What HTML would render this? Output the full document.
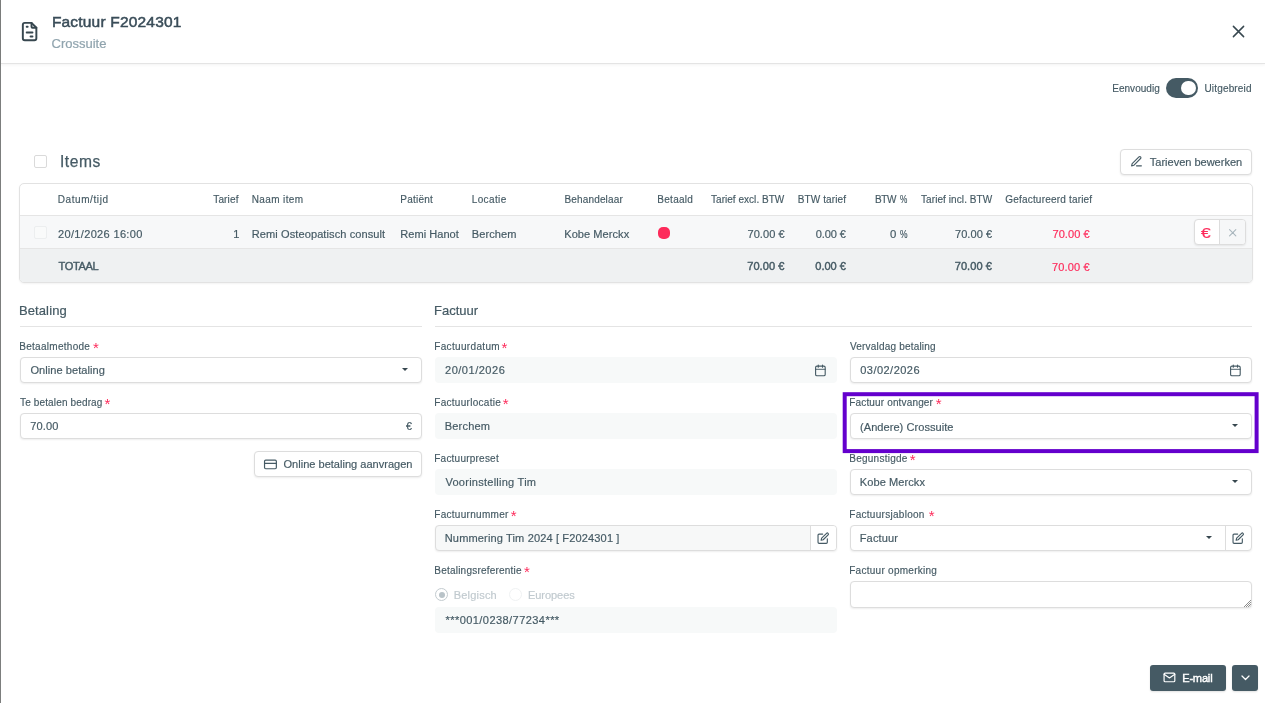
<!DOCTYPE html>
<html lang="nl">
<head>
<meta charset="utf-8">
<title>Factuur F2024301</title>
<style>
*{box-sizing:border-box;margin:0;padding:0}
html,body{width:1265px;height:703px;overflow:hidden;background:#fff}
body{font-family:"Liberation Sans",sans-serif;color:#455a64;font-size:12px;position:relative}
.abs{position:absolute}
.t{position:absolute;white-space:nowrap;line-height:1}
#txt{position:absolute;left:0;top:0;width:1265px;height:703px;will-change:transform}
#leftedge{position:absolute;left:0;top:0;width:1px;height:703px;background:#7c7e7d}
#header{position:absolute;left:1px;top:0;width:1264px;height:64px;border-bottom:1px solid #e4e4e4;box-shadow:0 1px 3px rgba(0,0,0,.05);background:#fff}
.inp{position:absolute;height:26px;border:1px solid #dddddd;border-radius:4px;background:#fff;box-shadow:0 1px 2px rgba(0,0,0,.07)}
.ro{position:absolute;height:26px;border-radius:4px;background:#f7f9f9}
.caret{position:absolute;width:0;height:0;border-left:3.25px solid transparent;border-right:3.25px solid transparent;border-top:3.5px solid #37474f}
.btn{position:absolute;border:1px solid #dddddd;border-radius:4px;background:#fff;box-shadow:0 1px 2px rgba(0,0,0,.08)}
svg{position:absolute;overflow:visible}
</style>
</head>
<body>
<div id="leftedge"></div>
<div id="header"></div>
<svg style="left:18.100px;top:20px" width="23.200" height="23.200" viewBox="0 0 24 24" fill="none" stroke="#37474f" stroke-width="2" stroke-linecap="round" stroke-linejoin="round"><path d="M14 3v4a1 1 0 0 0 1 1h4"/><path d="M17 21h-10a2 2 0 0 1 -2 -2v-14a2 2 0 0 1 2 -2h7l5 5v11a2 2 0 0 1 -2 2z"/><path d="M9 7h1M9 13h6M13 17h2"/></svg>
<svg style="left:1232px;top:25px" width="13" height="13" viewBox="0 0 13 13" stroke="#37474f" stroke-width="1.500" stroke-linecap="round"><path d="M1.400 1.400l10.200 10.200M11.600 1.400l-10.200 10.200"/></svg>

<!-- toggle -->
<div class="abs" style="left:1166px;top:78px;width:32px;height:20px;border-radius:10px;background:#455a64"></div>
<div class="abs" style="left:1181.200px;top:80.600px;width:14.800px;height:14.800px;border-radius:50%;background:#fff"></div>

<!-- items -->
<div class="abs" style="left:34px;top:155px;width:13px;height:13px;border:1px solid #dadada;border-radius:2px;background:#fff"></div>
<div class="btn" style="left:1120px;top:149px;width:132px;height:26px"></div>
<svg style="left:1129.700px;top:154.800px" width="13" height="13" viewBox="0 0 24 24" fill="none" stroke="#455a64" stroke-width="2.100" stroke-linecap="round" stroke-linejoin="round"><path d="M12 20h9"/><path d="M16.500 3.500a2.121 2.121 0 0 1 3 3L7 19l-4 1 1-4L16.500 3.500z"/></svg>

<!-- table -->
<div class="abs" id="table" style="left:19px;top:183px;width:1234px;height:100px;border:1px solid #e2e2e2;border-radius:5px;background:#fff;overflow:hidden;box-shadow:0 1px 2px rgba(0,0,0,.05)">
  <div class="abs" style="left:0;top:31px;width:1234px;height:1px;background:#e5e5e5"></div>
  <div class="abs" style="left:0;top:32px;width:1234px;height:33px;background:#f7f8f9"></div>
  <div class="abs" style="left:0;top:64px;width:1234px;height:1px;background:#e5e5e5"></div>
  <div class="abs" style="left:0;top:65px;width:1234px;height:34px;background:#eff1f2"></div>
</div>
<div class="abs" style="left:34px;top:226px;width:13px;height:13px;border:1px solid #eceeef;border-radius:2px;background:#f9fafa"></div>


<div class="abs" style="left:658px;top:227px;width:12px;height:12px;border-radius:5px;background:#fd2b5b"></div>


<!-- row buttons -->
<div class="btn" style="left:1194px;top:219px;width:52px;height:26px;overflow:hidden"><div class="abs" style="left:24px;top:0;width:1px;height:24px;background:#dddddd"></div><div class="abs" style="left:25px;top:0;width:25px;height:24px;background:#f6f7f8"></div></div>
<svg style="left:1228.700px;top:228.800px" width="7.400" height="7.400" viewBox="0 0 8 8" stroke="#a9b6bd" stroke-width="1.150" stroke-linecap="round"><path d="M.6.6l6.800 6.800M7.400.6L.6 7.400"/></svg>

<!-- sections -->
<div class="abs" style="left:20px;top:326px;width:402px;height:1px;background:#e4e4e4"></div>
<div class="abs" style="left:435px;top:326px;width:817px;height:1px;background:#e4e4e4"></div>

<!-- Betaling column -->
<div class="inp" style="left:20px;top:357px;width:402px"></div>
<div class="caret" style="left:401.750px;top:368px"></div>

<div class="inp" style="left:20px;top:413px;width:402px"></div>

<div class="btn" style="left:254px;top:451px;width:168px;height:26px"></div>
<svg style="left:263.800px;top:457.500px" width="12.900" height="12.900" viewBox="0 0 24 24" fill="none" stroke="#455a64" stroke-width="2.200" stroke-linecap="round" stroke-linejoin="round"><rect x="1" y="4" width="22" height="16" rx="2.200"/><path d="M1 10h22"/></svg>

<!-- Factuur col 1 -->
<div class="ro" style="left:435px;top:357px;width:402px"></div>
<svg style="left:814px;top:364.100px" width="12.800" height="12.800" viewBox="0 0 24 24" fill="none" stroke="#455a64" stroke-width="2.100" stroke-linecap="round" stroke-linejoin="round"><rect x="3" y="4" width="18" height="18" rx="2.500"/><path d="M16 2v4M8 2v4"/><path d="M3 10h18" stroke-opacity=".75"/></svg>

<div class="ro" style="left:435px;top:413px;width:402px"></div>

<div class="ro" style="left:435px;top:469px;width:402px"></div>

<div class="inp" style="left:435px;top:525px;width:402px;background:#f7f8f8;overflow:hidden"><div class="abs" style="left:374px;top:0;width:1px;height:24px;background:#dddddd"></div><div class="abs" style="left:375px;top:0;width:26px;height:24px;background:#fff"></div></div>
<svg style="left:816.900px;top:531.700px" width="12.400" height="12.400" viewBox="0 0 24 24" fill="none" stroke="#455a64" stroke-width="2.200" stroke-linecap="round" stroke-linejoin="round"><path d="M11 4H4a2 2 0 0 0-2 2v14a2 2 0 0 0 2 2h14a2 2 0 0 0 2-2v-7"/><path d="M18.500 2.500a2.121 2.121 0 0 1 3 3L12 15l-4 1 1-4 9.500-9.500z"/></svg>

<div class="abs" style="left:435px;top:588px;width:13px;height:13px;border-radius:50%;border:1px solid #c3cbcf;background:#fff"></div>
<div class="abs" style="left:438.500px;top:591.500px;width:6px;height:6px;border-radius:50%;background:#b9c3c8"></div>
<div class="abs" style="left:509px;top:588px;width:13px;height:13px;border-radius:50%;border:1px solid #f0f2f3;background:#fff"></div>
<div class="ro" style="left:435px;top:607px;width:402px"></div>

<!-- Factuur col 2 -->
<div class="inp" style="left:850px;top:357px;width:402px"></div>
<svg style="left:1229px;top:364.100px" width="12.800" height="12.800" viewBox="0 0 24 24" fill="none" stroke="#455a64" stroke-width="2.100" stroke-linecap="round" stroke-linejoin="round"><rect x="3" y="4" width="18" height="18" rx="2.500"/><path d="M16 2v4M8 2v4"/><path d="M3 10h18" stroke-opacity=".75"/></svg>

<svg style="left:0;top:0" width="1265" height="703"><rect x="844.700" y="394.200" width="411.900" height="56.900" fill="none" stroke="#6400cd" stroke-width="4"/></svg>
<div class="inp" style="left:850px;top:413px;width:402px"></div>
<div class="caret" style="left:1231.750px;top:424px"></div>

<div class="inp" style="left:850px;top:469px;width:402px"></div>
<div class="caret" style="left:1231.750px;top:480px"></div>

<div class="inp" style="left:850px;top:525px;width:402px;overflow:hidden"><div class="abs" style="left:374px;top:0;width:1px;height:24px;background:#dddddd"></div></div>
<div class="caret" style="left:1205.750px;top:536px"></div>
<svg style="left:1231.900px;top:531.700px" width="12.400" height="12.400" viewBox="0 0 24 24" fill="none" stroke="#455a64" stroke-width="2.200" stroke-linecap="round" stroke-linejoin="round"><path d="M11 4H4a2 2 0 0 0-2 2v14a2 2 0 0 0 2 2h14a2 2 0 0 0 2-2v-7"/><path d="M18.500 2.500a2.121 2.121 0 0 1 3 3L12 15l-4 1 1-4 9.500-9.500z"/></svg>

<div class="inp" style="left:850px;top:581px;width:402px;height:27px;overflow:hidden"><svg style="right:0;bottom:0" width="7" height="7" viewBox="0 0 7 7" fill="#8e8e8e" shape-rendering="crispEdges"><rect x="6" y="0" width="1" height="1"/><rect x="5" y="1" width="1" height="1"/><rect x="4" y="2" width="1" height="1"/><rect x="6" y="2" width="1" height="1"/><rect x="3" y="3" width="1" height="1"/><rect x="5" y="3" width="1" height="1"/><rect x="2" y="4" width="1" height="1"/><rect x="4" y="4" width="1" height="1"/><rect x="6" y="4" width="1" height="1"/><rect x="1" y="5" width="1" height="1"/><rect x="3" y="5" width="1" height="1"/><rect x="5" y="5" width="1" height="1"/><rect x="0" y="6" width="1" height="1"/><rect x="2" y="6" width="1" height="1"/><rect x="4" y="6" width="1" height="1"/><rect x="6" y="6" width="1" height="1"/></svg></div>


<!-- footer buttons -->
<div class="abs" style="left:1150px;top:665px;width:76px;height:26px;border-radius:3px;background:#455a64;box-shadow:0 1px 2px rgba(0,0,0,.12)"></div>
<svg style="left:1163px;top:670.900px" width="12.900" height="12.900" viewBox="0 0 24 24" fill="none" stroke="#fff" stroke-width="2.200" stroke-linecap="round" stroke-linejoin="round"><path d="M4 4h16c1.100 0 2 .9 2 2v12c0 1.100-.9 2-2 2H4c-1.100 0-2-.9-2-2V6c0-1.100.9-2 2-2z"/><path d="M22 6l-10 7L2 6"/></svg>
<div class="abs" style="left:1232px;top:665px;width:26px;height:26px;border-radius:3px;background:#455a64;box-shadow:0 1px 2px rgba(0,0,0,.12)"></div>
<svg style="left:1241px;top:675px" width="9" height="6" viewBox="0 0 9 6" fill="none" stroke="#fff" stroke-width="1.250" stroke-linecap="round" stroke-linejoin="round"><path d="M1 1l3.500 3.500L8 1"/></svg>
<div id="txt">
<div class="t" style="left:51.90px;top:14px;font-size:15.5px;color:#3a4d59;-webkit-text-stroke:0.51px #3a4d59;letter-spacing:0.190px;">Factuur F2024301</div>
<div class="t" style="left:51.50px;top:37px;font-size:13px;color:#90a4ae;-webkit-text-stroke:0.21px #90a4ae;">Crossuite</div>
<div class="t" style="left:1112.25px;top:84px;font-size:10px;color:#455a64;-webkit-text-stroke:0.16px #455a64;letter-spacing:0.025px;">Eenvoudig</div>
<div class="t" style="left:1204.40px;top:84px;font-size:10px;color:#455a64;-webkit-text-stroke:0.16px #455a64;letter-spacing:0.178px;">Uitgebreid</div>
<div class="t" style="left:59.95px;top:154px;font-size:15.6px;color:#455a64;-webkit-text-stroke:0.25px #455a64;letter-spacing:0.575px;">Items</div>
<div class="t" style="left:1149.80px;top:157px;font-size:11.05px;color:#455a64;-webkit-text-stroke:0.18px #455a64;letter-spacing:-0.022px;">Tarieven bewerken</div>
<div class="t" style="left:57.75px;top:195px;font-size:10px;color:#455a64;-webkit-text-stroke:0.16px #455a64;letter-spacing:0.583px;">Datum/tijd</div>
<div class="t" style="left:213.25px;top:195px;font-size:10px;color:#455a64;-webkit-text-stroke:0.16px #455a64;letter-spacing:0.150px;">Tarief</div>
<div class="t" style="left:251.75px;top:195px;font-size:10px;color:#455a64;-webkit-text-stroke:0.16px #455a64;letter-spacing:0.375px;">Naam item</div>
<div class="t" style="left:400.25px;top:195px;font-size:10px;color:#455a64;-webkit-text-stroke:0.16px #455a64;letter-spacing:0.250px;">Patiënt</div>
<div class="t" style="left:471.75px;top:195px;font-size:10px;color:#455a64;-webkit-text-stroke:0.16px #455a64;letter-spacing:0.375px;">Locatie</div>
<div class="t" style="left:564.50px;top:195px;font-size:10px;color:#455a64;-webkit-text-stroke:0.16px #455a64;letter-spacing:0.150px;">Behandelaar</div>
<div class="t" style="left:657.25px;top:195px;font-size:10px;color:#455a64;-webkit-text-stroke:0.16px #455a64;letter-spacing:0.292px;">Betaald</div>
<div class="t" style="left:711.00px;top:195px;font-size:10px;color:#455a64;-webkit-text-stroke:0.16px #455a64;letter-spacing:0.033px;">Tarief excl. BTW</div>
<div class="t" style="left:797.75px;top:195px;font-size:10px;color:#455a64;-webkit-text-stroke:0.16px #455a64;letter-spacing:0.111px;">BTW tarief</div>
<div class="t" style="left:874.95px;top:195px;font-size:10px;color:#455a64;-webkit-text-stroke:0.16px #455a64;letter-spacing:-0.350px;">BTW</div>
<div class="t" style="left:900.09px;top:195px;font-size:10px;color:#455a64;-webkit-text-stroke:0.16px #455a64;transform:scaleX(0.824);transform-origin:0 0;">%</div>
<div class="t" style="left:921.00px;top:195px;font-size:10px;color:#455a64;-webkit-text-stroke:0.16px #455a64;letter-spacing:0.083px;">Tarief incl. BTW</div>
<div class="t" style="left:1005.25px;top:195px;font-size:10px;color:#455a64;-webkit-text-stroke:0.16px #455a64;letter-spacing:0.194px;">Gefactureerd tarief</div>
<div class="t" style="left:58.00px;top:229px;font-size:11.05px;color:#455a64;-webkit-text-stroke:0.18px #455a64;letter-spacing:0.321px;">20/1/2026 16:00</div>
<div class="t" style="left:233.25px;top:229px;font-size:11.05px;color:#455a64;-webkit-text-stroke:0.18px #455a64;">1</div>
<div class="t" style="left:251.75px;top:229px;font-size:11.05px;color:#455a64;-webkit-text-stroke:0.18px #455a64;letter-spacing:0.083px;">Remi Osteopatisch consult</div>
<div class="t" style="left:400.25px;top:229px;font-size:11.05px;color:#455a64;-webkit-text-stroke:0.18px #455a64;letter-spacing:0.028px;">Remi Hanot</div>
<div class="t" style="left:471.75px;top:229px;font-size:11.05px;color:#455a64;-webkit-text-stroke:0.18px #455a64;letter-spacing:0.083px;">Berchem</div>
<div class="t" style="left:564.25px;top:229px;font-size:11.05px;color:#455a64;-webkit-text-stroke:0.18px #455a64;letter-spacing:0.050px;">Kobe Merckx</div>
<div class="t" style="left:747.50px;top:229px;font-size:11.05px;color:#455a64;-webkit-text-stroke:0.18px #455a64;letter-spacing:0.042px;">70.00 €</div>
<div class="t" style="left:815.75px;top:229px;font-size:11.05px;color:#455a64;-webkit-text-stroke:0.18px #455a64;letter-spacing:-0.100px;">0.00 €</div>
<div class="t" style="left:889.84px;top:229px;font-size:11.05px;color:#455a64;-webkit-text-stroke:0.18px #455a64;transform:scaleX(1.026);transform-origin:0 0;">0</div>
<div class="t" style="left:900.01px;top:229px;font-size:11.05px;color:#455a64;-webkit-text-stroke:0.18px #455a64;transform:scaleX(0.768);transform-origin:0 0;">%</div>
<div class="t" style="left:955.00px;top:229px;font-size:11.05px;color:#455a64;-webkit-text-stroke:0.18px #455a64;letter-spacing:0.042px;">70.00 €</div>
<div class="t" style="left:1052.50px;top:229px;font-size:11.05px;color:#fd2b5b;-webkit-text-stroke:0.18px #fd2b5b;letter-spacing:0.042px;">70.00 €</div>
<div class="t" style="left:58.50px;top:261px;font-size:11.05px;color:#455a64;-webkit-text-stroke:0.42px #455a64;letter-spacing:-0.350px;">TOTAAL</div>
<div class="t" style="left:747.25px;top:261px;font-size:11.05px;color:#455a64;-webkit-text-stroke:0.42px #455a64;letter-spacing:0.042px;">70.00 €</div>
<div class="t" style="left:815.25px;top:261px;font-size:11.05px;color:#455a64;-webkit-text-stroke:0.42px #455a64;">0.00 €</div>
<div class="t" style="left:954.75px;top:261px;font-size:11.05px;color:#455a64;-webkit-text-stroke:0.42px #455a64;letter-spacing:0.042px;">70.00 €</div>
<div class="t" style="left:1052.00px;top:262px;font-size:11.05px;color:#fd2b5b;-webkit-text-stroke:0.18px #fd2b5b;letter-spacing:0.125px;">70.00 €</div>
<div class="t" style="left:18.90px;top:304px;font-size:13px;color:#455a64;-webkit-text-stroke:0.21px #455a64;letter-spacing:0.121px;">Betaling</div>
<div class="t" style="left:434.00px;top:304px;font-size:13px;color:#455a64;-webkit-text-stroke:0.21px #455a64;">Factuur</div>
<div class="t" style="left:19.25px;top:342px;font-size:10px;color:#455a64;-webkit-text-stroke:0.16px #455a64;letter-spacing:0.279px;">Betaalmethode</div>
<div class="t" style="left:20.00px;top:398px;font-size:10px;color:#455a64;-webkit-text-stroke:0.16px #455a64;letter-spacing:0.144px;">Te betalen bedrag</div>
<div class="t" style="left:434.25px;top:342px;font-size:10px;color:#455a64;-webkit-text-stroke:0.16px #455a64;letter-spacing:0.341px;">Factuurdatum</div>
<div class="t" style="left:434.25px;top:398px;font-size:10px;color:#455a64;-webkit-text-stroke:0.16px #455a64;letter-spacing:0.288px;">Factuurlocatie</div>
<div class="t" style="left:434.25px;top:454px;font-size:10px;color:#455a64;-webkit-text-stroke:0.16px #455a64;letter-spacing:0.229px;">Factuurpreset</div>
<div class="t" style="left:434.25px;top:510px;font-size:10px;color:#455a64;-webkit-text-stroke:0.16px #455a64;letter-spacing:0.292px;">Factuurnummer</div>
<div class="t" style="left:434.25px;top:566px;font-size:10px;color:#455a64;-webkit-text-stroke:0.16px #455a64;letter-spacing:0.222px;">Betalingsreferentie</div>
<div class="t" style="left:850.00px;top:342px;font-size:10px;color:#455a64;-webkit-text-stroke:0.16px #455a64;letter-spacing:0.191px;">Vervaldag betaling</div>
<div class="t" style="left:849.25px;top:398px;font-size:10px;color:#455a64;-webkit-text-stroke:0.16px #455a64;letter-spacing:0.156px;">Factuur ontvanger</div>
<div class="t" style="left:849.25px;top:454px;font-size:10px;color:#455a64;-webkit-text-stroke:0.16px #455a64;letter-spacing:0.250px;">Begunstigde</div>
<div class="t" style="left:849.25px;top:510px;font-size:10px;color:#455a64;-webkit-text-stroke:0.16px #455a64;letter-spacing:0.286px;">Factuursjabloon</div>
<div class="t" style="left:849.25px;top:566px;font-size:10px;color:#455a64;-webkit-text-stroke:0.16px #455a64;letter-spacing:0.266px;">Factuur opmerking</div>
<div class="t" style="left:30.45px;top:365px;font-size:11.05px;color:#455a64;-webkit-text-stroke:0.18px #455a64;letter-spacing:0.050px;">Online betaling</div>
<div class="t" style="left:30.20px;top:421px;font-size:11.05px;color:#455a64;-webkit-text-stroke:0.18px #455a64;letter-spacing:0.150px;">70.00</div>
<div class="t" style="left:406.00px;top:421px;font-size:11.05px;color:#455a64;-webkit-text-stroke:0.18px #455a64;transform:scaleX(0.976);transform-origin:0 0;">€</div>
<div class="t" style="left:283.50px;top:459px;font-size:11.05px;color:#455a64;-webkit-text-stroke:0.18px #455a64;">Online betaling aanvragen</div>
<div class="t" style="left:445.00px;top:365px;font-size:11.05px;color:#455a64;-webkit-text-stroke:0.18px #455a64;letter-spacing:0.500px;">20/01/2026</div>
<div class="t" style="left:444.75px;top:421px;font-size:11.05px;color:#455a64;-webkit-text-stroke:0.18px #455a64;letter-spacing:0.167px;">Berchem</div>
<div class="t" style="left:445.50px;top:477px;font-size:11.05px;color:#455a64;-webkit-text-stroke:0.18px #455a64;letter-spacing:0.235px;">Voorinstelling Tim</div>
<div class="t" style="left:444.75px;top:533px;font-size:11.05px;color:#455a64;-webkit-text-stroke:0.18px #455a64;letter-spacing:0.133px;">Nummering Tim 2024 [ F2024301 ]</div>
<div class="t" style="left:453.75px;top:590px;font-size:11.05px;color:#c1cacf;-webkit-text-stroke:0.18px #c1cacf;letter-spacing:0.179px;">Belgisch</div>
<div class="t" style="left:528.00px;top:590px;font-size:11.05px;color:#c1cacf;-webkit-text-stroke:0.18px #c1cacf;letter-spacing:-0.071px;">Europees</div>
<div class="t" style="left:445.50px;top:615px;font-size:11.05px;color:#455a64;-webkit-text-stroke:0.18px #455a64;letter-spacing:0.421px;">***001/0238/77234***</div>
<div class="t" style="left:860.25px;top:365px;font-size:11.05px;color:#455a64;-webkit-text-stroke:0.18px #455a64;letter-spacing:0.444px;">03/02/2026</div>
<div class="t" style="left:860.00px;top:422px;font-size:11.05px;color:#455a64;-webkit-text-stroke:0.18px #455a64;letter-spacing:0.044px;">(Andere) Crossuite</div>
<div class="t" style="left:859.75px;top:477px;font-size:11.05px;color:#455a64;-webkit-text-stroke:0.18px #455a64;letter-spacing:0.075px;">Kobe Merckx</div>
<div class="t" style="left:859.75px;top:533px;font-size:11.05px;color:#455a64;-webkit-text-stroke:0.18px #455a64;letter-spacing:0.125px;">Factuur</div>
<div class="t" style="left:1182.20px;top:673px;font-size:11.05px;color:#ffffff;-webkit-text-stroke:0.42px #ffffff;letter-spacing:-0.180px;">E-mail</div>
<div class="t" style="left:1200.80px;top:225px;font-size:15.2px;color:#fd2b5b;-webkit-text-stroke:0.24px #fd2b5b;transform:scaleX(1.141);transform-origin:0 0;">€</div>
<div class="t" style="left:93.10px;top:340.20px;font-size:15px;color:#fd2b5b">*</div>
<div class="t" style="left:104.60px;top:396.10px;font-size:15px;color:#fd2b5b">*</div>
<div class="t" style="left:501.60px;top:340.20px;font-size:15px;color:#fd2b5b">*</div>
<div class="t" style="left:502.85px;top:396.10px;font-size:15px;color:#fd2b5b">*</div>
<div class="t" style="left:510.85px;top:507.90px;font-size:15px;color:#fd2b5b">*</div>
<div class="t" style="left:524.10px;top:563.60px;font-size:15px;color:#fd2b5b">*</div>
<div class="t" style="left:935.85px;top:396.10px;font-size:15px;color:#fd2b5b">*</div>
<div class="t" style="left:909.85px;top:452.10px;font-size:15px;color:#fd2b5b">*</div>
<div class="t" style="left:928.85px;top:507.90px;font-size:15px;color:#fd2b5b">*</div>
</div>
</body>
</html>
